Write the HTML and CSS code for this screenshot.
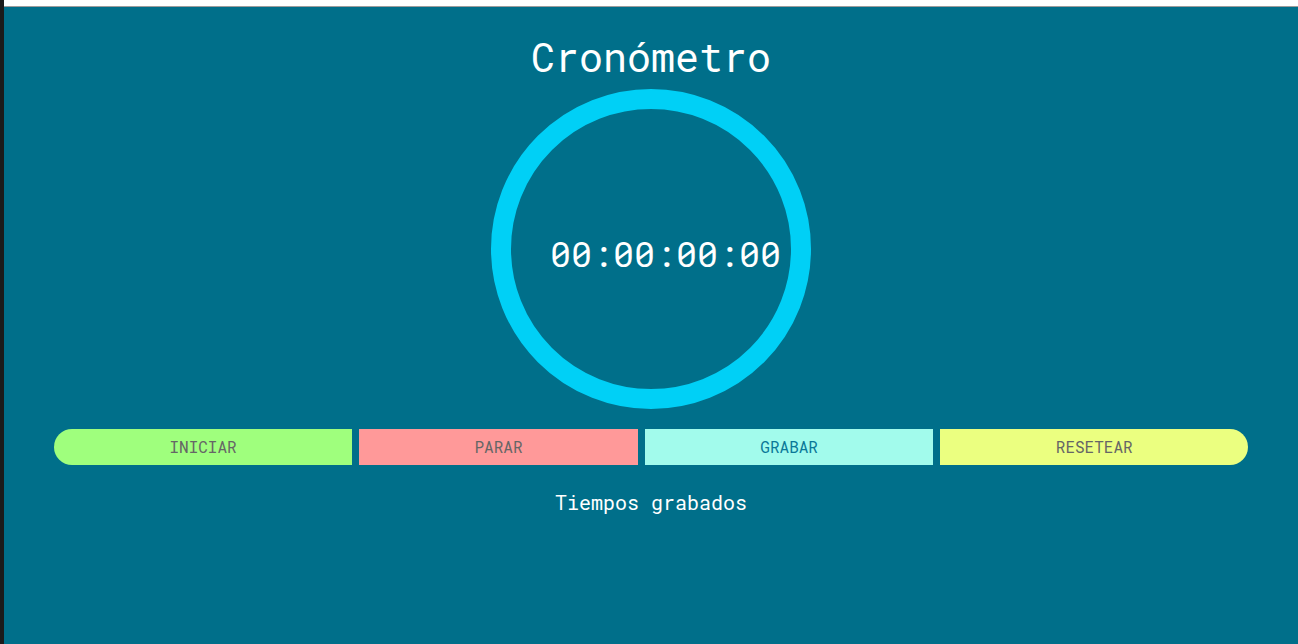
FILE: index.html
```html
<!DOCTYPE html>
<html lang="es">
<head>
<meta charset="utf-8">
<title>Cronómetro</title>
<link rel="stylesheet" href="styles.css">
</head>
<body>
<div class="edge"></div>
<div class="page">
  <div class="topbar"></div>
  <main class="app">
    <h1 class="title">Cronómetro</h1>
    <div class="dial">
      <span class="time">00:00:00:00</span>
    </div>
    <div class="controls">
      <button class="btn btn-start">INICIAR</button>
      <button class="btn btn-stop">PARAR</button>
      <button class="btn btn-record">GRABAR</button>
      <button class="btn btn-reset">RESETEAR</button>
    </div>
    <h2 class="records-title">Tiempos grabados</h2>
  </main>
</div>
</body>
</html>
```
FILE: styles.css
```css
html, body {
  margin: 0;
  padding: 0;
  height: 100%;
}
body {
  display: flex;
  background: #1b1b1b;
  font-family: "Roboto Mono", "DejaVu Sans Mono", "Liberation Mono", monospace;
  overflow: hidden;
}
.edge {
  width: 4px;
  flex: none;
}
.page {
  flex: 1;
  display: flex;
  flex-direction: column;
  background: #006f8a;
}
.topbar {
  height: 6px;
  background: #ffffff;
  border-bottom: 1px solid #9c9c9c;
  flex: none;
}
.app {
  flex: 1;
  display: flex;
  flex-direction: column;
  align-items: center;
  padding: 0 50px;
}
.title {
  margin: 26px 0 0;
  font-size: 40px;
  line-height: 48px;
  font-weight: 400;
  color: #ffffff;
}
.dial {
  margin-top: 8px;
  width: 320px;
  height: 320px;
  box-sizing: border-box;
  border: 20px solid #00d0f6;
  border-radius: 50%;
  display: flex;
  align-items: center;
  padding: 8px 0 0 39px;
}
.time {
  font-size: 35px;
  line-height: 42px;
  color: #ffffff;
  white-space: nowrap;
}
.controls {
  margin-top: 20px;
  align-self: stretch;
  display: flex;
  gap: 7px;
}
.btn {
  flex: 1 1 auto;
  height: 36px;
  padding: 0 0 2px;
  border: none;
  font-family: inherit;
  font-size: 16px;
  color: #666666;
  cursor: pointer;
}
.btn-start {
  background: #9fff7d;
  border-radius: 18px 0 0 18px;
}
.btn-stop {
  background: #ff9999;
}
.btn-record {
  background: #a2fbec;
  color: #0a7898;
}
.btn-reset {
  background: #ebff80;
  border-radius: 0 18px 18px 0;
}
.records-title {
  margin: 25px 0 0;
  font-size: 20px;
  line-height: 24px;
  font-weight: 400;
  color: #ffffff;
}
```
